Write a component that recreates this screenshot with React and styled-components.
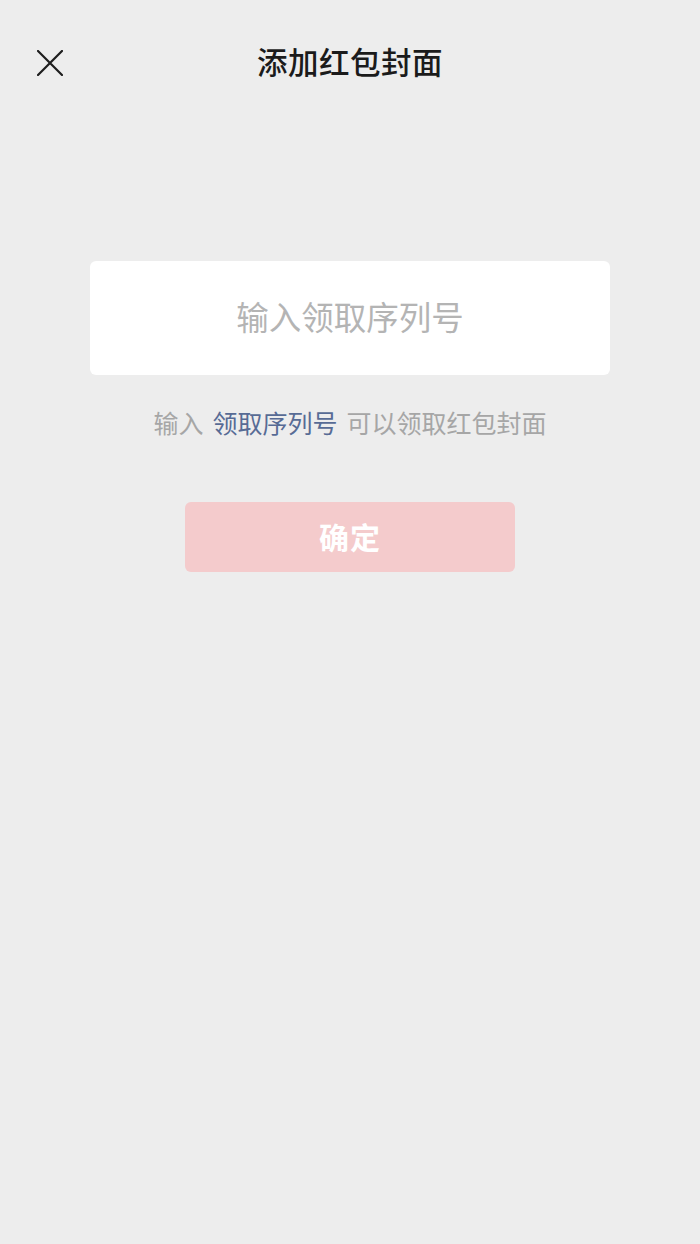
import React from "react";
import styled, { createGlobalStyle } from "styled-components";

const Global = createGlobalStyle`
  html, body { margin: 0; padding: 0; background: #ededed; }
  body { font-family: "Noto Sans CJK SC", "Noto Sans", sans-serif; }
`;

const Page = styled.div`
  width: 700px;
  min-height: 1244px;
  background: #ededed;
  display: flex;
  flex-direction: column;
  align-items: center;
`;

const NavBar = styled.div`
  width: 100%;
  height: 122px;
  display: grid;
  grid-template-columns: 100px 1fr 100px;
  align-items: center;
  box-sizing: border-box;
`;

const CloseBtn = styled.button`
  border: none;
  background: none;
  padding: 0;
  margin-left: 37px;
  margin-top: 4px;
  width: 26px;
  height: 26px;
  display: flex;
  cursor: pointer;
`;

const Title = styled.h1`
  margin: 0;
  text-align: center;
  font-size: 30.5px;
  font-weight: 500;
  color: #1b1b1b;
  letter-spacing: 0.5px;
`;

const Card = styled.div`
  margin-top: 139px;
  width: 520px;
  height: 114px;
  background: #fff;
  border-radius: 6px;
  display: flex;
  align-items: center;
  justify-content: center;
`;

const Input = styled.input`
  border: none;
  outline: none;
  background: transparent;
  width: 100%;
  text-align: center;
  font-family: inherit;
  font-size: 32.5px;
  line-height: 44px;
  padding: 0 0 4px;
  color: #333;
  &::placeholder { color: #b4b4b4; }
`;

const Hint = styled.p`
  margin: 27px 0 0;
  font-size: 25px;
  line-height: 40px;
  color: #a6a6a6;
`;

const Link = styled.span`
  color: #576b95;
  margin: 0 9px;
`;

const Confirm = styled.button`
  margin-top: 60px;
  width: 330px;
  height: 70px;
  border: none;
  border-radius: 6px;
  background: #f4cbcc;
  color: #fff;
  font-family: inherit;
  font-size: 30px;
  font-weight: 700;
  letter-spacing: 1px;
  padding: 0 0 2px;
`;

export default function App() {
  return (
    <Page>
      <Global />
      <NavBar>
        <CloseBtn aria-label="关闭">
          <svg width="26" height="26" viewBox="0 0 26 26">
            <path d="M1 1 L25 25 M25 1 L1 25" stroke="#1e1e1e" strokeWidth="2.2" strokeLinecap="square" />
          </svg>
        </CloseBtn>
        <Title>添加红包封面</Title>
        <div />
      </NavBar>
      <Card>
        <Input placeholder="输入领取序列号" />
      </Card>
      <Hint>
        输入<Link>领取序列号</Link>可以领取红包封面
      </Hint>
      <Confirm>确定</Confirm>
    </Page>
  );
}
